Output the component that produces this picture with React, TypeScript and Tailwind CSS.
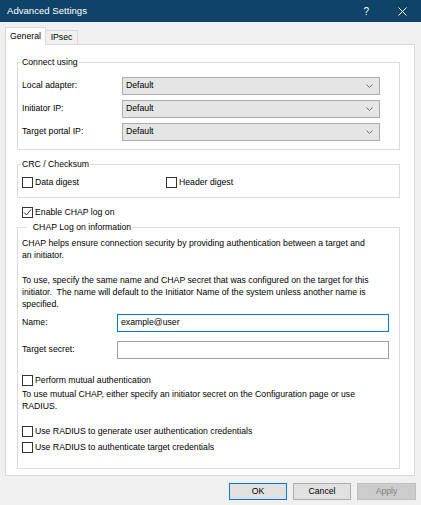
import React from "react";

function Checkbox({ checked = false }: { checked?: boolean }) {
  return (
    <span className="flex h-[11px] w-[11px] shrink-0 items-center justify-center border border-[#333333] bg-white">
      {checked && (
        <svg width="9" height="9" viewBox="0 0 9 9">
          <polyline points="1,4.5 3.5,7 8,1.5" fill="none" stroke="#333333" strokeWidth="1" />
        </svg>
      )}
    </span>
  );
}

function CheckRow({ label, checked }: { label: string; checked?: boolean }) {
  return (
    <div className="flex h-[11px] items-center gap-[2px]">
      <Checkbox checked={checked} />
      <span className="whitespace-nowrap leading-[11px]">{label}</span>
    </div>
  );
}

function SelectRow({ label }: { label: string }) {
  return (
    <div className="flex h-[18px] items-center">
      <span className="w-[100px]">{label}</span>
      <div className="flex h-[18px] w-[258px] items-center justify-between border border-[#adadad] bg-[#e5e5e5] pl-[3px] pr-[6px]">
        <span>Default</span>
        <svg width="7" height="4" viewBox="0 0 7 4">
          <polyline points="0.5,0.5 3.5,3.5 6.5,0.5" fill="none" stroke="#707070" strokeWidth="1" />
        </svg>
      </div>
    </div>
  );
}

function GroupLabel({ text, indent = false }: { text: string; indent?: boolean }) {
  return (
    <span
      className={`absolute top-[-7px] bg-white px-px leading-[12px] whitespace-pre ${indent ? "left-[9px]" : "left-[3px]"}`}
    >
      {text}
    </span>
  );
}

export default function App() {
  return (
    <div className="h-[505px] w-[421px] overflow-hidden bg-[#f0f0f0] font-['Liberation_Sans',Arial,sans-serif] text-[8.7px] text-black">
      {/* title bar */}
      <div className="flex h-[22px] items-center bg-[#0f4468] pl-[7px] text-white">
        <span className="flex-1 text-[9.6px]">Advanced Settings</span>
        <span className="mr-[29px] text-[10px]">?</span>
        <svg width="9" height="9" viewBox="0 0 9 9" className="mr-[14px]">
          <line x1="0.5" y1="0.5" x2="8.5" y2="8.5" stroke="white" strokeWidth="1" />
          <line x1="8.5" y1="0.5" x2="0.5" y2="8.5" stroke="white" strokeWidth="1" />
        </svg>
      </div>

      <div className="px-[5px] pt-[5px]">
        {/* tabs */}
        <div className="flex h-[17px] items-end">
          <div className="relative z-10 mb-[-1px] flex h-[18px] w-[41px] items-center justify-center border border-b-0 border-[#d9d9d9] bg-white">
            General
          </div>
          <div className="flex h-[14px] w-[32px] items-center justify-center border-r border-t border-[#d9d9d9] bg-[#f0f0f0]">
            IPsec
          </div>
        </div>

        {/* tab panel */}
        <div className="h-[432px] w-[410px] border border-[#d9d9d9] bg-white pl-[11px] pr-[14px]">
          {/* Connect using */}
          <div className="relative mt-[17px] flex h-[88px] flex-col gap-[5px] border border-[#dcdcdc] pl-[4px] pt-[14px]">
            <GroupLabel text="Connect using" />
            <SelectRow label="Local adapter:" />
            <SelectRow label="Initiator IP:" />
            <SelectRow label="Target portal IP:" />
          </div>

          {/* CRC / Checksum */}
          <div className="relative mt-[14px] flex h-[34px] border border-[#dcdcdc] pl-[4px] pt-[12px]">
            <GroupLabel text="CRC / Checksum" />
            <div className="w-[144px]">
              <CheckRow label="Data digest" />
            </div>
            <CheckRow label="Header digest" />
          </div>

          <div className="mt-[9px] pl-[5px]">
            <CheckRow label="Enable CHAP log on" checked />
          </div>

          {/* CHAP Log on information */}
          <div className="relative mt-[9px] flex h-[242px] flex-col border border-[#dcdcdc] pl-[4px]">
            <GroupLabel text="  CHAP Log on information" indent />
            <p className="mt-[9px] whitespace-pre leading-[12px]">
              CHAP helps ensure connection security by providing authentication between a target and
              {"\n"}an initiator.
            </p>
            <p className="mt-[13px] whitespace-pre leading-[12px]">
              To use, specify the same name and CHAP secret that was configured on the target for this
              {"\n"}initiator.  The name will default to the Initiator Name of the system unless another name is
              {"\n"}specified.
            </p>

            <div className="mt-[4px] flex h-[18px] items-center">
              <span className="w-[95px]">Name:</span>
              <div className="flex h-[18px] w-[272px] items-center border border-[#0078d7] pl-[3px]">
                example@user
              </div>
            </div>
            <div className="mt-[9px] flex h-[18px] items-center">
              <span className="w-[95px]">Target secret:</span>
              <div className="h-[18px] w-[272px] border border-[#a0a0a0]" />
            </div>

            <div className="mt-[16px]">
              <CheckRow label="Perform mutual authentication" />
            </div>
            <p className="mt-[2px] whitespace-pre leading-[12px]">
              To use mutual CHAP, either specify an initiator secret on the Configuration page or use
              {"\n"}RADIUS.
            </p>

            <div className="mt-[14px]">
              <CheckRow label="Use RADIUS to generate user authentication credentials" />
            </div>
            <div className="mt-[5px]">
              <CheckRow label="Use RADIUS to authenticate target credentials" />
            </div>
          </div>
        </div>

        {/* buttons */}
        <div className="mt-[7px] flex justify-end gap-[6px]">
          <button className="flex h-[17px] w-[58px] items-center justify-center border border-[#0078d7] bg-[#e1e1e1]">
            OK
          </button>
          <button className="flex h-[17px] w-[58px] items-center justify-center border border-[#adadad] bg-[#e1e1e1]">
            Cancel
          </button>
          <button className="flex h-[17px] w-[59px] items-center justify-center border border-[#bfbfbf] bg-[#cccccc] text-[#838383]">
            Apply
          </button>
        </div>
      </div>
    </div>
  );
}
